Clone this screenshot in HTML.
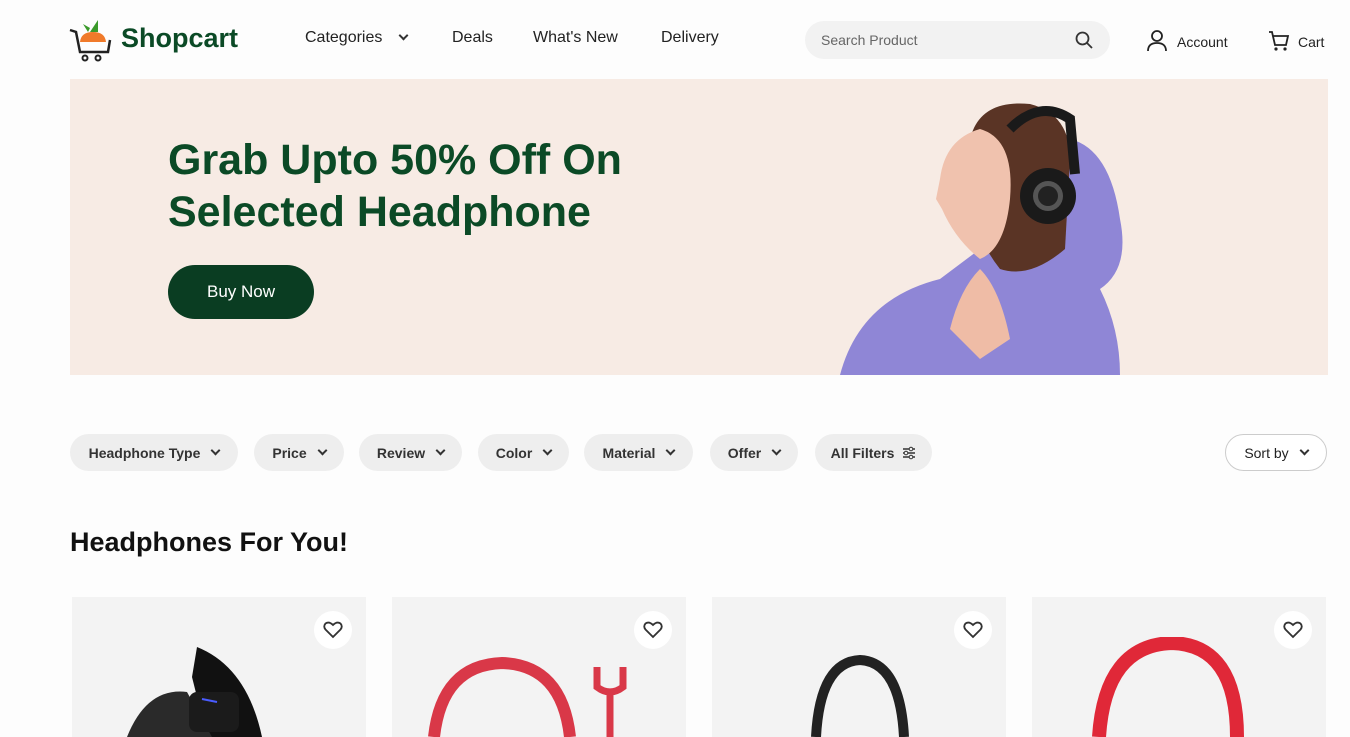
<!DOCTYPE html>
<html><head><style>
*{margin:0;padding:0;box-sizing:border-box}
body{width:1350px;height:728px;overflow:hidden;background:#fdfdfd;font-family:"Liberation Sans",sans-serif;color:#222;position:relative}
.a{position:absolute}
.nav{font-size:16px;color:#222;top:29px}
.pill{position:absolute;top:434px;height:37px;border-radius:19px;background:#eeeeee;font-size:14px;font-weight:bold;color:#333;display:flex;align-items:center;justify-content:center;gap:8px}
.chev{width:7px;height:7px;border-right:2px solid #333;border-bottom:2px solid #333;transform:rotate(45deg);margin-top:-4px;margin-left:4px}
.card{position:absolute;top:597px;width:294px;height:140px;background:#f3f3f3}
.heart{position:absolute;top:14px;right:14px;width:38px;height:38px;border-radius:50%;background:#fff;display:flex;align-items:center;justify-content:center}
</style></head><body>
<svg class="a" style="left:68px;top:18px" width="46" height="44" viewBox="0 0 46 44">
<path d="M22 14 L30 2 L30 14 Z" fill="#3a9a2a"/><path d="M20 14 L15 6 L22 10Z" fill="#3a9a2a"/>
<path d="M12 24 Q13 14 25 14 Q37 14 38 24 Z" fill="#f07a2a"/>
<path d="M2 12 L8 14 L12 34 L40 34 L42 22" fill="none" stroke="#222" stroke-width="2.5"/>
<circle cx="17" cy="40" r="2.5" fill="none" stroke="#222" stroke-width="2"/><circle cx="30" cy="40" r="2.5" fill="none" stroke="#222" stroke-width="2"/>
</svg>
<div class="a" style="left:121px;top:23px;font-size:27px;font-weight:bold;color:#0b4a26">Shopcart</div>
<div class="a nav" style="left:305px">Categories</div><div class="a chev" style="left:396px;top:36px"></div>
<div class="a nav" style="left:452px">Deals</div>
<div class="a nav" style="left:533px">What's New</div>
<div class="a nav" style="left:661px">Delivery</div>
<div class="a" style="left:805px;top:21px;width:305px;height:38px;border-radius:19px;background:#f2f2f2"></div>
<div class="a" style="left:821px;top:32px;font-size:14px;color:#666">Search Product</div>
<svg class="a" style="left:1075px;top:31px" width="18" height="18"><circle cx="7.5" cy="7.5" r="6" fill="none" stroke="#333" stroke-width="1.8"/><path d="M12 12 L17 17" stroke="#333" stroke-width="1.8"/></svg>
<svg class="a" style="left:1147px;top:30px" width="20" height="22"><circle cx="10" cy="6" r="5" fill="none" stroke="#222" stroke-width="1.8"/><path d="M1 21 Q1 13 10 13 Q19 13 19 21" fill="none" stroke="#222" stroke-width="1.8"/></svg>
<div class="a" style="left:1177px;top:34px;font-size:14px">Account</div>
<svg class="a" style="left:1268px;top:30px" width="22" height="22"><path d="M1 2 L4 2 L7 15 L18 15 L20 6 L5 6" fill="none" stroke="#222" stroke-width="1.8"/><circle cx="8" cy="19" r="1.6" fill="#222"/><circle cx="17" cy="19" r="1.6" fill="#222"/></svg>
<div class="a" style="left:1298px;top:34px;font-size:14px">Cart</div>

<div class="a" style="left:70px;top:79px;width:1258px;height:296px;background:#f7ebe4;overflow:hidden">
<svg class="a" style="left:760px;top:20px" width="320" height="276" viewBox="0 0 320 276">
<path d="M10 276 Q30 200 110 180 L150 150 Q180 130 200 100 Q220 60 240 40 Q280 50 290 120 Q300 170 270 190 Q290 230 290 276Z" fill="#8f86d6"/>
<path d="M140 40 Q150 0 200 5 Q240 15 240 60 L235 150 Q200 180 170 170 Q130 120 140 40Z" fill="#5a3425"/>
<path d="M110 80 Q115 40 150 30 Q185 40 180 100 Q175 150 150 160 Q125 140 112 110 L106 100Z" fill="#f0c2ae"/>
<path d="M150 170 Q170 190 180 240 L150 260 L120 230 Q130 190 150 170Z" fill="#efbca6"/>
<circle cx="218" cy="97" r="28" fill="#1a1a1a"/><circle cx="218" cy="97" r="15" fill="#555"/><circle cx="218" cy="97" r="10" fill="#222"/>
<path d="M180 30 Q210 0 240 20 L245 75" fill="none" stroke="#1a1a1a" stroke-width="10"/>
</svg>
</div>
<div class="a" style="left:168px;top:134px;font-size:43px;line-height:52px;font-weight:bold;color:#0b4a26">Grab Upto 50% Off On<br>Selected Headphone</div>
<div class="a" style="left:168px;top:265px;width:146px;height:54px;border-radius:27px;background:#0a3d22;color:#fff;font-size:17px;display:flex;align-items:center;justify-content:center">Buy Now</div>

<div class="pill" style="left:70px;width:168px">Headphone Type<span class="chev"></span></div>
<div class="pill" style="left:254px;width:90px">Price<span class="chev"></span></div>
<div class="pill" style="left:359px;width:103px">Review<span class="chev"></span></div>
<div class="pill" style="left:478px;width:91px">Color<span class="chev"></span></div>
<div class="pill" style="left:584px;width:109px">Material<span class="chev"></span></div>
<div class="pill" style="left:710px;width:88px">Offer<span class="chev"></span></div>
<div class="pill" style="left:815px;width:117px">All Filters <svg width="14" height="14"><path d="M1 3H13M1 7H13M1 11H13" stroke="#333" stroke-width="1.5"/><circle cx="9" cy="3" r="1.8" fill="#eee" stroke="#333"/><circle cx="4" cy="7" r="1.8" fill="#eee" stroke="#333"/><circle cx="9" cy="11" r="1.8" fill="#eee" stroke="#333"/></svg></div>
<div class="pill" style="left:1225px;width:102px;background:#fff;border:1px solid #ccc;font-weight:normal;color:#222">Sort by<span class="chev"></span></div>

<div class="a" style="left:70px;top:527px;font-size:27px;font-weight:bold;color:#111">Headphones For You!</div>

<div class="card" style="left:72px"><div class="heart"><svg width="20" height="18" viewBox="0 0 20 18"><path d="M10 16 L2.5 8.5 Q0 5.5 2.5 2.5 Q6 0 10 4 Q14 0 17.5 2.5 Q20 5.5 17.5 8.5Z" fill="none" stroke="#333" stroke-width="1.8"/></svg></div>
<svg class="a" style="left:55px;top:50px" width="180" height="90"><path d="M65 30 L70 0 Q120 20 135 90 L80 90Z" fill="#111"/><path d="M0 90 Q20 40 60 45 L85 90Z" fill="#2a2a2a"/><rect x="62" y="45" width="50" height="40" rx="8" fill="#1b1b1b"/><path d="M75 52 L90 55" stroke="#4a5cff" stroke-width="2"/></svg></div>
<div class="card" style="left:392px"><div class="heart"><svg width="20" height="18" viewBox="0 0 20 18"><path d="M10 16 L2.5 8.5 Q0 5.5 2.5 2.5 Q6 0 10 4 Q14 0 17.5 2.5 Q20 5.5 17.5 8.5Z" fill="none" stroke="#333" stroke-width="1.8"/></svg></div>
<svg class="a" style="left:30px;top:60px" width="220" height="80"><path d="M12 80 Q20 8 80 6 Q140 8 148 80" fill="none" stroke="#d93848" stroke-width="12"/><path d="M175 10 L175 30 Q188 40 201 30 L201 10 M188 36 L188 80" fill="none" stroke="#d93848" stroke-width="7"/></svg></div>
<div class="card" style="left:712px"><div class="heart"><svg width="20" height="18" viewBox="0 0 20 18"><path d="M10 16 L2.5 8.5 Q0 5.5 2.5 2.5 Q6 0 10 4 Q14 0 17.5 2.5 Q20 5.5 17.5 8.5Z" fill="none" stroke="#333" stroke-width="1.8"/></svg></div>
<svg class="a" style="left:90px;top:55px" width="120" height="85"><path d="M14 85 Q18 10 58 8 Q98 10 102 85" fill="none" stroke="#222" stroke-width="10"/></svg></div>
<div class="card" style="left:1032px"><div class="heart"><svg width="20" height="18" viewBox="0 0 20 18"><path d="M10 16 L2.5 8.5 Q0 5.5 2.5 2.5 Q6 0 10 4 Q14 0 17.5 2.5 Q20 5.5 17.5 8.5Z" fill="none" stroke="#333" stroke-width="1.8"/></svg></div>
<svg class="a" style="left:55px;top:40px" width="160" height="100"><path d="M12 100 Q18 8 85 6 Q150 8 150 100" fill="none" stroke="#e02838" stroke-width="14"/></svg></div>
</body></html>
